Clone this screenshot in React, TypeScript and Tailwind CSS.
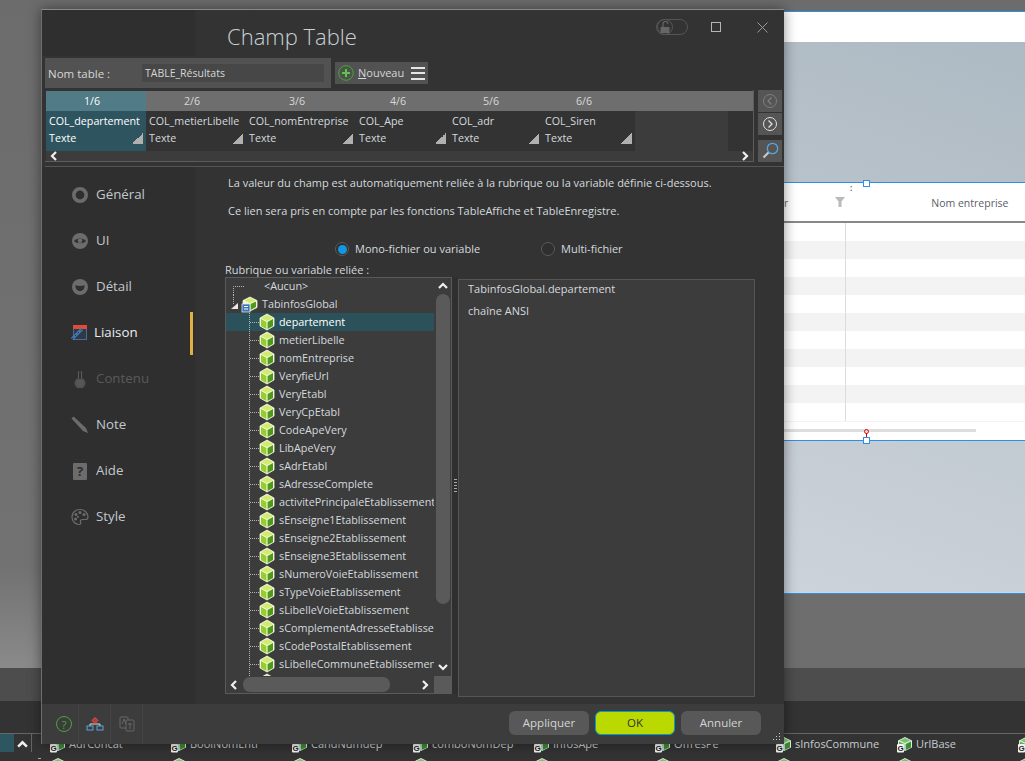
import React from "react";

const fields = ["departement","metierLibelle","nomEntreprise","VeryfieUrl","VeryEtabl","VeryCpEtabl","CodeApeVery","LibApeVery","sAdrEtabl","sAdresseComplete","activitePrincipaleEtablissement","sEnseigne1Etablissement","sEnseigne2Etablissement","sEnseigne3Etablissement","sNumeroVoieEtablissement","sTypeVoieEtablissement","sLibelleVoieEtablissement","sComplementAdresseEtablissement","sCodePostalEtablissement","sLibelleCommuneEtablissement",""];

const columns = [
  { name: "COL_departement", head: "1/6", w: "w-[100px]", pad: "pl-[38px]", sel: true },
  { name: "COL_metierLibelle", head: "2/6", w: "w-[100px]", pad: "pl-[38px]" },
  { name: "COL_nomEntreprise", head: "3/6", w: "w-[110px]", pad: "pl-[43px]" },
  { name: "COL_Ape", head: "4/6", w: "w-[93px]", pad: "pl-[34px]" },
  { name: "COL_adr", head: "5/6", w: "w-[93px]", pad: "pl-[34px]" },
  { name: "COL_Siren", head: "6/6", w: "w-[93px]", pad: "pl-[34px]" },
];

const bottomItems = ["AdrConcat","BoolNomEntr","CandNumdep","comboNomDep","InfosApe","OffresPe","sInfosCommune","UrlBase",""];

function Cube() {
  return (
    <svg width="16" height="18" viewBox="0 0 16 18" className="shrink-0">
      <path d="M8 1 15 5v8l-7 4-7-4V5z" fill="#f0f7d0" stroke="#f4f8e0" strokeWidth="0.8" />
      <path d="M8 2 14 5 8 8 2 5z" fill="#d2ea6e" />
      <path d="M2 6l5.400 3v7L2 13z" fill="#96cc2e" />
      <path d="M14 6 8.600 9v7L14 13z" fill="#4d9a1c" />
    </svg>
  );
}

function GCube({ peek }: { peek?: boolean }) {
  return (
    <svg width="16" height="17" viewBox="0 0 16 17" className="shrink-0">
      <path d="M8 1 15 4.500v7L8 15 1 11.500v-7z" fill="#dfeedd" />
      <path d="M8 2 13.500 4.500 8 7 2.500 4.500z" fill="#7cc36e" />
      <path d="M2 5.500l5.300 2.500v6L2 11.500z" fill="#5fae50" />
      <path d="M14 5.500 8.700 8v6l5.300-2.500z" fill="#3e8c35" />
      {!peek && <rect x="0" y="8" width="7" height="8.500" rx="1" fill="#f4f4f4" />}
      {!peek && <text x="3.500" y="15" textAnchor="middle" fontSize="8" fontWeight="700" fill="#222" fontFamily="Liberation Sans, sans-serif">G</text>}
    </svg>
  );
}

function Connector() {
  return (
    <svg width="10" height="18" className="shrink-0">
      <path d="M0.500 0V18M1 9.500H10" stroke="#b5b5b5" strokeDasharray="1 1" fill="none" />
    </svg>
  );
}

function Corner() {
  return <span className="ml-auto mb-[3px] mr-[3px] h-[11px] w-[11px] bg-[linear-gradient(135deg,transparent_50%,#b0b0b0_50%)]" />;
}

function Chevron({ dir, size = 10 }: { dir: "l" | "r" | "u" | "d"; size?: number }) {
  const d = { l: "M7 1 3 5l4 4", r: "M3 1l4 4-4 4", u: "M1 7l4-4 4 4", d: "M1 3l4 4 4-4" }[dir];
  return (
    <svg width={size} height={size} viewBox="0 0 10 10" className="shrink-0">
      <path d={d} stroke="#f0f0f0" strokeWidth="2.200" fill="none" />
    </svg>
  );
}

function SideIcon({ k }: { k: string }) {
  const g = "#6c6c6c";
  if (k === "gen") return <svg width="18" height="18" viewBox="0 0 18 18"><circle cx="9" cy="9" r="6.200" fill="none" stroke={g} strokeWidth="3.600" /></svg>;
  if (k === "ui") return (
    <svg width="18" height="18" viewBox="0 0 18 18">
      <circle cx="9" cy="9" r="8" fill={g} />
      <path d="M3 9c2-3.500 10-3.500 12 0-2 3-10 3-12 0z" fill="#2f2f2f" />
      <circle cx="9" cy="8.800" r="2.300" fill={g} />
    </svg>
  );
  if (k === "det") return (
    <svg width="18" height="18" viewBox="0 0 18 18">
      <circle cx="9" cy="9" r="8" fill={g} />
      <path d="M4.500 7c1.500 1.200 7.500 1.200 9 0 .3 4-2 6-4.500 6S4.200 11 4.500 7z" fill="#2f2f2f" />
    </svg>
  );
  if (k === "lia") return (
    <svg width="18" height="18" viewBox="0 0 18 18" className="ml-[-2px]">
      <rect x="3.500" y="1.500" width="13" height="14" fill="#2f3a45" stroke="#3f6f9f" />
      <rect x="3" y="1" width="14" height="4" fill="#e04b3c" />
      <path d="M2 15 12 5" stroke="#3f7fc0" strokeWidth="3" />
      <path d="M2 15 12 5" stroke="#2f2f2f" strokeWidth="1" strokeDasharray="2 2" />
    </svg>
  );
  if (k === "con") return (
    <svg width="18" height="18" viewBox="0 0 18 18">
      <path d="M7.500 1v7.500a4.800 4.800 0 1 0 3 0V1" fill="none" stroke="#575757" strokeWidth="1.200" />
      <circle cx="9" cy="13" r="4" fill="#575757" />
    </svg>
  );
  if (k === "not") return (
    <svg width="18" height="18" viewBox="0 0 18 18">
      <path d="M0.500 2.500 2.500 0.500 15 12l2 5-5-2z" fill={g} />
    </svg>
  );
  if (k === "aid") return (
    <div className="flex h-[17px] w-[14px] items-center justify-center rounded-[1px] bg-[#6c6c6c] text-[13px] font-bold leading-none text-[#2f2f2f]">?</div>
  );
  return (
    <svg width="18" height="18" viewBox="0 0 18 18">
      <path d="M9 1.500C4 1.500 1 5 1 9s3 7.500 7 7.500c2 0 2-1.500 1.500-2.500s0-2.500 2-2.500h3c1.500 0 2.500-1 2.500-2.500C17 5 13.500 1.500 9 1.500z" fill="none" stroke={g} strokeWidth="1.200" />
      <circle cx="5" cy="6.500" r="1.500" fill={g} /><circle cx="9" cy="4.500" r="1.500" fill={g} /><circle cx="13" cy="6.500" r="1.500" fill={g} /><circle cx="4.500" cy="11" r="1.500" fill={g} /><circle cx="7" cy="9" r="1" fill={g} />
    </svg>
  );
}

const sideItems = [
  { k: "gen", label: "Général" },
  { k: "ui", label: "UI" },
  { k: "det", label: "Détail" },
  { k: "lia", label: "Liaison", active: true },
  { k: "con", label: "Contenu", off: true },
  { k: "not", label: "Note" },
  { k: "aid", label: "Aide" },
  { k: "sty", label: "Style" },
];

function Background() {
  return (
    <div className="flex h-full flex-col">
      <div className="flex h-[668px] shrink-0 bg-[linear-gradient(180deg,#6c6c6c,#727272_85%,#8a8a8a)]">
        <div className="w-[41px] shrink-0" />
        <div className="flex min-w-0 flex-1 flex-col pt-[11px]">
          <div className="h-[583px] shrink-0 border-y border-[#2f8fe6] bg-[#d0d6dc]">
            <div className="h-[30px] bg-white" />
            <div className="h-[140px] bg-[linear-gradient(200deg,#aebac3,#c3ccd4)]" />
            <div className="relative h-[259px] border-y border-[#2f8fe6] bg-white">
              <div className="flex h-[38px] items-center pt-[4px]">
                <span className="ml-[743px] text-[10.500px] text-[#666]">r</span>
                <svg width="12" height="12" viewBox="0 0 12 12" className="ml-[46px] mt-[-4px]"><path d="M1 1h10L7.500 5.500V11h-3V5.500z" fill="#bbb" /></svg>
                <span className="ml-[85px] text-[10.500px] text-[#5b6068]">Nom entreprise</span>
              </div>
              <div className="h-[2px] bg-[#888]" />
              {Array.from({ length: 11 }).map((_, i) => (
                <div key={i} className={`h-[18px] ${i % 2 ? "bg-[#f3f3f3]" : "bg-white"}`}>
                  <div className="h-full w-[805px] border-r border-[#dcdcdc]" />
                </div>
              ))}
              <div className="h-px bg-[#f3f3f3]" />
              <div className="mt-[7px] h-[3px] w-[935px] bg-[#dedede]" />
              <span className="absolute left-[822px] top-[-3px] h-[7px] w-[7px] border border-[#2f8fe6] bg-white" />
              <span className="absolute left-[822px] top-[254px] h-[7px] w-[7px] border border-[#2f8fe6] bg-white" />
              <span className="absolute left-[823px] top-[246px] h-[5px] w-[5px] rounded-full border border-[#e00000]" />
              <span className="absolute left-[825px] top-[250px] h-[4px] w-px bg-[#e00000]" />
              <span className="absolute left-[809px] top-[3px] text-[8px] font-bold leading-[4px] text-[#666]">:</span>
            </div>
            <div className="h-[151px] bg-[linear-gradient(200deg,#c2cad2,#d8dde3)]" />
          </div>
          <div className="flex-1 bg-[#6e6e6e]" />
        </div>
      </div>
      <div className="h-[33px] shrink-0 bg-[#4d4d4d]" />
      <div className="h-[32px] shrink-0 bg-[#333]" />
      <div className="relative min-h-0 flex-1 overflow-hidden border-t border-[#666] bg-[#333]">
        <div className="absolute left-0 top-0 flex h-[18px] w-[32px] border-r border-[#666]">
          <div className="w-[14px] bg-[#2e5661]" />
          <div className="ml-[3px] mt-[5px]"><Chevron dir="u" size={11} /></div>
        </div>
        <div className="absolute left-[38px] top-[24px] h-px w-[3px] bg-[#aaa]" />
        <div className="ml-[50px] mt-[2px] grid grid-cols-[repeat(9,121px)]">
          {bottomItems.map((n, i) => (
            <div key={i} className="flex h-[21px] items-start gap-[3px]">
              <GCube />
              <span className="text-[11px] leading-[16px] text-[#c6ccd2]">{n}</span>
            </div>
          ))}
          {bottomItems.map((_, i) => (
            <div key={i} className="flex"><GCube peek /></div>
          ))}
        </div>
      </div>
    </div>
  );
}

function Header() {
  return (
    <div className="flex h-[46px] shrink-0">
      <div className="w-[153px] shrink-0 bg-[#2f2f2f]" />
      <div className="flex flex-1 items-start pl-[32px]">
        <div className="mt-[9px] text-[22px] font-light leading-[34px] text-[#c9d0d6]">Champ Table</div>
        <div className="ml-auto mt-[9px] flex items-center">
          <div className="flex h-[16px] w-[32px] items-center rounded-full border border-[#555]">
            <div className="flex h-[16px] w-[16px] items-center justify-center rounded-full border border-[#555]">
              <svg width="12" height="12" viewBox="0 0 12 12">
                <rect x="1.500" y="6" width="9" height="6" fill="#666" />
                <path d="M4 6V3a2.500 2.500 0 0 1 5 0" fill="none" stroke="#666" strokeWidth="1.200" />
              </svg>
            </div>
          </div>
          <div className="ml-[23px] h-[10px] w-[10px] border border-[#b5b5b5]" />
          <svg width="11" height="11" viewBox="0 0 11 11" className="ml-[36px] mr-[16px]">
            <path d="M.500.500l10 10M10.500.500l-10 10" stroke="#9a9a9a" strokeWidth="1" />
          </svg>
        </div>
      </div>
    </div>
  );
}

function NomRow() {
  return (
    <div className="ml-[3px] mt-[2px] flex h-[30px] items-center">
      <div className="flex h-[30px] w-[286px] items-center bg-[#525252] pl-[3px] text-[11.500px] text-[#d6d6d6]">
        <span className="w-[94px] pt-px">Nom table :</span>
        <div className="flex h-[18px] w-[182px] items-center bg-[#474747] px-[3px] pt-px text-[10.500px]">TABLE_Résultats</div>
      </div>
      <div className="ml-[4px] flex h-[22px] w-[93px] items-center bg-[#525252] pl-[3px] text-[#d6d6d6]">
        <svg width="16" height="16" viewBox="0 0 16 16" className="shrink-0">
          <circle cx="8" cy="8" r="7.300" fill="#3a5a35" fillOpacity="0.300" stroke="#4aa53a" />
          <path d="M8 4v8M4 8h8" stroke="#62c24e" strokeWidth="2" />
        </svg>
        <span className="ml-[4px] pt-px text-[11px]"><span className="underline">N</span>ouveau</span>
        <div className="ml-[7px] flex h-[13px] w-[14px] flex-col justify-between">
          <span className="h-[2px] bg-[#e6e6e6]" /><span className="h-[2px] bg-[#e6e6e6]" /><span className="h-[2px] bg-[#e6e6e6]" />
        </div>
      </div>
    </div>
  );
}

function ColumnsTable() {
  return (
    <div className="h-[72px] w-[709px] shrink-0 border-b border-r border-[#5c5c5c] pl-px pt-px">
      <div className="flex h-[20px] bg-[#6e6e6e] text-[10.700px] leading-[20px] text-[#d8d8d8]">
        {columns.map((c) => (
          <div key={c.head} className={`${c.w} ${c.pad} ${c.sel ? "bg-[#517b86] text-white" : ""}`}>{c.head}</div>
        ))}
      </div>
      <div className="flex h-[40px] bg-[#3c3c3c]">
        {columns.map((c) => (
          <div key={c.name} className={`flex ${c.w} flex-col whitespace-nowrap pl-[3px] text-[10.700px] leading-[17px] ${c.sel ? "bg-[#2e555f] text-white" : "bg-[#333] text-[#d4dadf]"}`}>
            <div className="mt-[2px]">{c.name}</div>
            <div className="flex items-end"><span>Texte</span><Corner /></div>
          </div>
        ))}
        <div className="ml-[93px] flex-1 bg-[#333]" />
      </div>
      <div className="flex h-[10px] items-center justify-between bg-[#3c3c3c] px-[3px]">
        <Chevron dir="l" /><Chevron dir="r" />
      </div>
    </div>
  );
}

function SideButtons() {
  return (
    <div className="ml-[4px] flex w-[24px] flex-col">
      <div className="flex h-[22px] items-center justify-center bg-[#555]">
        <svg width="16" height="16" viewBox="0 0 16 16"><circle cx="8" cy="8" r="6.500" fill="none" stroke="#7e7e7e" /><path d="M9.500 4.500 6 8l3.500 3.500" fill="none" stroke="#7e7e7e" strokeWidth="1.300" /></svg>
      </div>
      <div className="mt-px flex h-[22px] items-center justify-center bg-[#555]">
        <svg width="16" height="16" viewBox="0 0 16 16"><circle cx="8" cy="8" r="6.500" fill="none" stroke="#e0e0e0" /><path d="M6.500 4.500 10 8l-3.500 3.500" fill="none" stroke="#e0e0e0" strokeWidth="1.300" /></svg>
      </div>
      <div className="mt-[5px] flex h-[22px] items-center justify-center bg-[#555]">
        <svg width="18" height="18" viewBox="0 0 18 18"><circle cx="11.500" cy="6.500" r="5.200" fill="none" stroke="#58a5e0" strokeWidth="1.300" /><path d="M7.500 10.500 2.500 15.500" stroke="#c8c8c8" strokeWidth="2.200" /></svg>
      </div>
    </div>
  );
}

function Radio({ on }: { on?: boolean }) {
  return (
    <span className="flex h-[14px] w-[14px] items-center justify-center rounded-full border border-[#5a5a5a] bg-[#2f2f2f]">
      {on && <span className="h-[9px] w-[9px] rounded-full bg-[#1298e0]" />}
    </span>
  );
}

function Tree() {
  return (
    <div className="flex h-[417px] w-[227px] shrink-0 flex-col border border-[#5a5a5a] bg-[#3c3c3c] text-[10.800px] text-[#d4dadf]">
      <div className="flex min-h-0 flex-1">
        <div className="w-[208px] overflow-hidden">
          <div className="flex h-[17px] items-center">
            <svg width="38" height="17" className="shrink-0"><path d="M7.500 17V8.500H19" stroke="#b5b5b5" strokeDasharray="1 1" fill="none" /></svg>
            <span>&lt;Aucun&gt;</span>
          </div>
          <div className="flex h-[18px] items-center">
            <svg width="36" height="18" viewBox="0 0 36 18" className="shrink-0">
              <path d="M7.500 0V9" stroke="#b5b5b5" strokeDasharray="1 1" />
              <path d="M5 14 12 14 12 8z" fill="#e8e8e8" />
              <path d="M24 2l7 3.500v7L24 16l-7-3.500v-7z" fill="#f0f7d0" stroke="#eef5d0" strokeWidth="0.800" />
              <path d="M24 3l5.500 2.600L24 8l-5.500-2.400z" fill="#d2ea6e" />
              <path d="M30 6.500v5.500l-5.500 3V9z" fill="#4d9a1c" />
              <rect x="16" y="9" width="8" height="8" fill="#3f74b5" stroke="#dfe8f5" strokeWidth="0.800" />
              <path d="M18 11.500h4M18 14h4" stroke="#fff" />
            </svg>
            <span>TabinfosGlobal</span>
          </div>
          {fields.map((f, i) => (
            <div key={i} className={`flex h-[18px] items-center ${i === 0 ? "bg-[#2b525b] text-white" : ""}`}>
              <div className="ml-[23px] flex items-center"><Connector /><Cube /></div>
              <span className="ml-[4px] whitespace-nowrap">{f}</span>
            </div>
          ))}
        </div>
        <div className="flex w-[17px] flex-col items-center pt-[3px]">
          <Chevron dir="u" />
          <div className="mt-[3px] h-[310px] w-[14px] rounded-[7px] bg-[#5a5a5a]" />
          <div className="mt-[58px]"><Chevron dir="d" /></div>
        </div>
      </div>
      <div className="flex h-[17px] shrink-0 items-center">
        <div className="ml-[3px]"><Chevron dir="l" /></div>
        <div className="ml-[4px] h-[15px] w-[147px] rounded-[7px] bg-[#5a5a5a]" />
        <div className="ml-[30px]"><Chevron dir="r" /></div>
        <div className="ml-auto h-full w-[17px] bg-[#5a5a5a]" />
      </div>
    </div>
  );
}

function Main() {
  return (
    <div className="min-w-0 flex-1 pl-[33px] pt-[8px] text-[11px] text-[#d4dadf]">
      <div className="h-[16px] whitespace-nowrap leading-[16px]">La valeur du champ est automatiquement reliée à la rubrique ou la variable définie ci-dessous.</div>
      <div className="mt-[12px] h-[16px] whitespace-nowrap leading-[16px]">Ce lien sera pris en compte par les fonctions TableAffiche et TableEnregistre.</div>
      <div className="ml-[107px] mt-[22px] flex h-[16px] items-center">
        <Radio on />
        <span className="ml-[6px] w-[186px]">Mono-fichier ou variable</span>
        <Radio />
        <span className="ml-[6px]">Multi-fichier</span>
      </div>
      <div className="ml-[-3px] mt-[5px] h-[15px] leading-[15px]">Rubrique ou variable reliée :</div>
      <div className="ml-[-3px] flex items-start">
        <Tree />
        <div className="flex h-[417px] w-[6px] shrink-0 flex-col items-center justify-center gap-[2px] bg-[#2f2f2f]">
          <span className="h-px w-[3px] bg-[#aaa]" /><span className="h-px w-[3px] bg-[#aaa]" /><span className="h-px w-[3px] bg-[#aaa]" /><span className="h-px w-[3px] bg-[#aaa]" /><span className="h-px w-[3px] bg-[#aaa]" />
        </div>
        <div className="mt-[2px] h-[418px] w-[297px] shrink-0 border border-[#555] bg-[#3c3c3c] pl-[9px] pt-px leading-[16px]">
          <div>TabinfosGlobal.departement</div>
          <div className="mt-[6px]">chaîne ANSI</div>
        </div>
      </div>
    </div>
  );
}

function Sidebar() {
  return (
    <div className="w-[153px] shrink-0 bg-[#2f2f2f] pt-[5px]">
      {sideItems.map((s) => (
        <div key={s.k} className="flex h-[46px] items-center">
          <div className="flex w-[52px] shrink-0 justify-end pr-[5px]"><div className="flex w-[18px] justify-center"><SideIcon k={s.k} /></div></div>
          <span className={`${s.active ? "ml-0 text-[#e8edf2]" : s.off ? "ml-[2px] text-[#5a5a5a]" : "ml-[2px] text-[#c2c8ce]"} flex-1 text-[13.300px]`}>{s.label}</span>
          {s.active && <span className="mr-[2px] h-[43px] w-[3px] bg-[#e0b040]" />}
        </div>
      ))}
    </div>
  );
}

function Footer() {
  const btn = "flex h-[24px] w-[80px] items-center justify-center rounded-[6px] text-[11.500px]";
  return (
    <div className="flex h-[40px] shrink-0 items-center bg-[#3c3c3c]">
      <div className="flex h-full w-[37px] items-center justify-end border-r border-[#444] pr-[6px]">
        <div className="flex h-[16px] w-[16px] items-center justify-center rounded-full border border-[#4aa53a] text-[11px] leading-none text-[#4aa53a]">?</div>
      </div>
      <div className="flex h-full w-[32px] items-center justify-center border-r border-[#444]">
        <svg width="18" height="14" viewBox="0 0 18 14"><path d="M4 9V7h10v2" stroke="#ddd" fill="none" /><rect x="1" y="9" width="6" height="4" fill="none" stroke="#5aa5e0" /><rect x="11" y="9" width="6" height="4" fill="none" stroke="#5aa5e0" /><path d="M9 .5 12 3.500 9 6.500 6 3.500z" fill="#b93a3a" stroke="#e05050" /></svg>
      </div>
      <div className="flex h-full w-[32px] items-center justify-center border-r border-[#444]">
        <svg width="16" height="16" viewBox="0 0 16 16">
          <rect x="1" y="1" width="8" height="11" rx="1" fill="none" stroke="#666" />
          <rect x="7" y="4" width="8" height="11" rx="1" fill="#3c3c3c" stroke="#666" />
          <path d="M3 8l2-5 2 5M9 8h4M11 7v6" stroke="#666" fill="none" />
        </svg>
      </div>
      <div className="mb-[2px] ml-auto flex gap-[6px] pr-[23px]">
        <div className={`${btn} bg-[#585858] text-[#d4d4d4]`}>Appliquer</div>
        <div className={`${btn} border border-[#0a9ac8] bg-[#b9d900] text-[#333]`}>OK</div>
        <div className={`${btn} bg-[#585858] text-[#d4d4d4]`}>Annuler</div>
      </div>
    </div>
  );
}

export default function App() {
  return (
    <div className="relative h-[761px] w-[1025px] overflow-hidden bg-[#333] font-['Open_Sans',sans-serif]">
      <Background />
      <div className="absolute left-[41px] top-[9px] flex h-[735px] w-[743px] flex-col border-l border-t border-[#6e6e6e] border-t-[#8a8a8a] bg-[#333] shadow-[0_0_12px_rgba(0,0,0,0.45)]">
        <Header />
        <NomRow />
        <div className="ml-[3px] mt-[2px] flex">
          <ColumnsTable />
          <SideButtons />
        </div>
        <div className="ml-[3px] mt-[4px] h-px bg-[#555]" />
        <div className="flex min-h-0 flex-1">
          <Sidebar />
          <Main />
        </div>
        <Footer />
        <svg width="9" height="9" viewBox="0 0 9 9" className="absolute bottom-[3px] right-[3px]">
          <path d="M7 1h1v1H7zM4 4h1v1H4zM7 4h1v1H7zM1 7h1v1H1zM4 7h1v1H4zM7 7h1v1H7z" fill="#ccc" />
        </svg>
      </div>
    </div>
  );
}
